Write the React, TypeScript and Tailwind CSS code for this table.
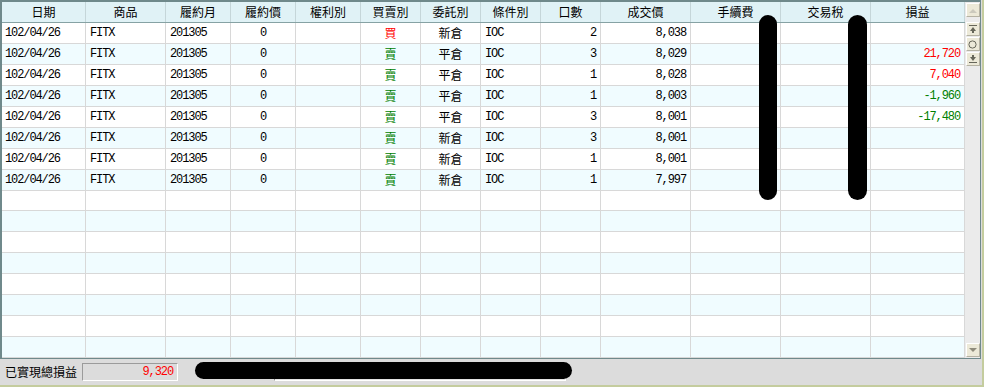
import React from 'react'

const COLS = [
  { w: 'w-[84px]', h: '日期' },
  { w: 'w-[80px]', h: '商品' },
  { w: 'w-[65px]', h: '履約月' },
  { w: 'w-[65px]', h: '履約價' },
  { w: 'w-[65px]', h: '權利別' },
  { w: 'w-[60px]', h: '買賣別' },
  { w: 'w-[60px]', h: '委託別' },
  { w: 'w-[60px]', h: '條件別' },
  { w: 'w-[60px]', h: '口數' },
  { w: 'w-[90px]', h: '成交價' },
  { w: 'w-[90px]', h: '手續費' },
  { w: 'w-[90px]', h: '交易稅' },
  { w: 'w-[94px]', h: '損益' }
]

type Trade = {
  side: '買' | '賣'
  kind: string
  qty: number
  price: string
  pnl?: string
}

const TRADES: Trade[] = [
  { side: '買', kind: '新倉', qty: 2, price: '8,038' },
  { side: '賣', kind: '平倉', qty: 3, price: '8,029', pnl: '21,720' },
  { side: '賣', kind: '平倉', qty: 1, price: '8,028', pnl: '7,040' },
  { side: '賣', kind: '平倉', qty: 1, price: '8,003', pnl: '-1,960' },
  { side: '賣', kind: '平倉', qty: 3, price: '8,001', pnl: '-17,480' },
  { side: '賣', kind: '新倉', qty: 3, price: '8,001' },
  { side: '賣', kind: '新倉', qty: 1, price: '8,001' },
  { side: '賣', kind: '新倉', qty: 1, price: '7,997' }
]

const mono = "font-['Liberation_Mono',monospace] text-[12px] tracking-[-1.1px]"
const cjk = "font-['Noto_Sans_CJK_TC','Noto_Sans_CJK_SC',sans-serif] text-[12px]"

function Cell({ i, className = '', children }: { i: number; className?: string; children?: React.ReactNode }) {
  return (
    <div className={`${COLS[i].w} shrink-0 h-full border-r border-[#d8d8d8] flex items-center px-[4px] ${className}`}>
      {children}
    </div>
  )
}

function TradeRow({ t, odd }: { t: Trade; odd: boolean }) {
  const neg = t.pnl?.startsWith('-')
  return (
    <div className={`flex h-[21px] border-b border-[#d8d8d8] text-black ${odd ? 'bg-[#f0fcff]' : 'bg-white'}`}>
      <Cell i={0} className={`pl-[3px] ${mono}`}>102/04/26</Cell>
      <Cell i={1} className={mono}>FITX</Cell>
      <Cell i={2} className={mono}>201305</Cell>
      <Cell i={3} className={`justify-center ${mono}`}>0</Cell>
      <Cell i={4} />
      <Cell i={5} className={`justify-center ${cjk} ${t.side === '買' ? 'text-[#ff0000]' : 'text-[#008000]'}`}>
        {t.side}
      </Cell>
      <Cell i={6} className={`justify-center ${cjk}`}>{t.kind}</Cell>
      <Cell i={7} className={mono}>IOC</Cell>
      <Cell i={8} className={`justify-end ${mono}`}>{t.qty}</Cell>
      <Cell i={9} className={`justify-end ${mono}`}>{t.price}</Cell>
      <Cell i={10} />
      <Cell i={11} />
      <Cell i={12} className={`justify-end ${mono} ${neg ? 'text-[#008000]' : 'text-[#ff0000]'}`}>
        {t.pnl}
      </Cell>
    </div>
  )
}

function EmptyRow({ odd }: { odd: boolean }) {
  return (
    <div className={`flex h-[21px] border-b border-[#d8d8d8] ${odd ? 'bg-[#f0fcff]' : 'bg-white'}`}>
      {COLS.map((_, i) => (
        <Cell key={i} i={i} />
      ))}
    </div>
  )
}

function SbButton({ children, className = '' }: { children: React.ReactNode; className?: string }) {
  return (
    <div
      className={`w-[14px] h-[14px] bg-[#ece9d8] border border-t-white border-l-white border-r-[#b5b2a3] border-b-[#b5b2a3] flex items-center justify-center ${className}`}
    >
      {children}
    </div>
  )
}

export default function App() {
  const empty = Array.from({ length: 16 - TRADES.length }, (_, i) => i + TRADES.length)

  return (
    <div className="relative w-[984px] h-[387px] bg-[#dcdcdc] border-r-2 border-b-2 border-[#c4cc9e] flex flex-col overflow-hidden">
      {/* grid */}
      <div className="w-[981px] h-[359px] shrink-0 border-l-2 border-t-2 border-r border-b border-[#6f898b] flex overflow-hidden">
        <div className="w-[963px] shrink-0 flex flex-col">
          <div className="flex h-[21px] shrink-0 bg-[#e0f2f6] border-b border-[#86a2a4]">
            {COLS.map((c) => (
              <div
                key={c.h}
                className={`${c.w} shrink-0 h-full border-r border-[#c5d6d9] flex items-center justify-center text-black ${cjk}`}
              >
                {c.h}
              </div>
            ))}
          </div>
          {TRADES.map((t, i) => (
            <TradeRow key={i} t={t} odd={i % 2 === 1} />
          ))}
          {empty.map((i) => (
            <EmptyRow key={i} odd={i % 2 === 1} />
          ))}
        </div>
        {/* vertical scrollbar */}
        <div className="w-[15px] shrink-0 bg-[#ebebeb] flex flex-col items-center pt-[1px] pb-[1px]">
          <SbButton>
            <svg width="8" height="5" viewBox="0 0 8 5">
              <path d="M0 5 L4 1 L8 5 Z" fill="#cbc9bd" />
            </svg>
          </SbButton>
          <SbButton className="mt-[5px]">
            <svg width="8" height="8" viewBox="0 0 8 8">
              <rect x="0" y="0" width="8" height="1" fill="#66665a" />
              <path d="M1 6 L4 2 L7 6 Z" fill="#66665a" />
              <rect x="3" y="6" width="2" height="2" fill="#66665a" />
            </svg>
          </SbButton>
          <SbButton className="mt-[1px]">
            <svg width="9" height="9" viewBox="0 0 9 9">
              <circle cx="4.5" cy="4.5" r="3.6" fill="none" stroke="#66665a" strokeWidth="1" />
            </svg>
          </SbButton>
          <SbButton className="mt-[1px]">
            <svg width="8" height="8" viewBox="0 0 8 8">
              <rect x="3" y="0" width="2" height="2" fill="#66665a" />
              <path d="M1 2 L4 6 L7 2 Z" fill="#66665a" />
              <rect x="0" y="7" width="8" height="1" fill="#66665a" />
            </svg>
          </SbButton>
          <SbButton className="mt-auto">
            <svg width="8" height="5" viewBox="0 0 8 5">
              <path d="M0 0 L4 4 L8 0 Z" fill="#8f8c7c" />
            </svg>
          </SbButton>
        </div>
      </div>

      {/* status bar */}
      <div className="flex-1 flex items-center pl-[5px] bg-[#dcdcdc]">
        <span className={`text-black ${cjk}`}>已實現總損益</span>
        <div
          className={`ml-[5px] w-[96px] h-[18px] flex items-center justify-end pr-[4px] border border-t-[#9b9b9b] border-l-[#9b9b9b] border-r-white border-b-white text-[#ff0000] ${mono}`}
        >
          9,320
        </div>
        <div className="ml-[96px] w-[292px] h-[17px] border border-t-[#8f8f8f] border-l-[#8f8f8f] border-r-white border-b-white bg-[#e4e4e4]" />
      </div>

      {/* redaction marks */}
      <div className="absolute left-[759px] top-[15px] w-[18px] h-[185px] rounded-full bg-black" />
      <div className="absolute left-[848px] top-[15px] w-[19px] h-[185px] rounded-full bg-black" />
      <div className="absolute left-[195px] top-[362px] w-[377px] h-[17px] rounded-full bg-black" />
    </div>
  )
}
